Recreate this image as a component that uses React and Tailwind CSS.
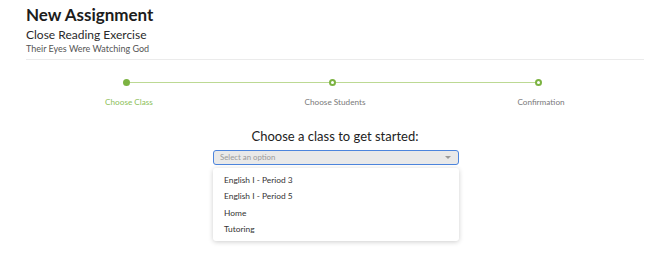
const steps = [
    { label: 'Choose Class', done: true },
    { label: 'Choose Students', done: false },
    { label: 'Confirmation', done: false },
];

const options = ['English I - Period 3', 'English I - Period 5', 'Home', 'Tutoring'];

const Step = ({ step, index, count }) => {
    return (
        <div className="flex flex-col items-center">
            <div className="flex items-center w-full h-[7px] -translate-x-[3px]">
                <div className={`flex-1 h-px ${index === 0 ? '' : 'bg-[#bcd993]'}`} />
                {step.done ? (
                    <div className="w-[7px] h-[7px] rounded-full bg-[#7cb342]" />
                ) : (
                    <div className="w-[7px] h-[7px] rounded-full border-2 border-[#7cb342] bg-white" />
                )}
                <div className={`flex-1 h-px ${index === count - 1 ? '' : 'bg-[#bcd993]'}`} />
            </div>
            <p className={`mt-[10.8px] text-[8.2px] leading-[10px] ${step.done ? 'text-[#8dbf5a]' : 'text-[#7a7a7a]'}`}>
                {step.label}
            </p>
        </div>
    );
};

export default function App() {
    return (
        <div className="w-[670px] h-[272px] bg-white px-[26px] pt-[5px] font-['Lato',sans-serif] text-[#222]">
            <div className="pb-[5.5px] border-b border-[#ebebeb]">
                <h1 className="text-[17px] leading-[20px] font-bold text-[#1c1c1c]">New Assignment</h1>
                <h2 className="mt-[3px] text-[12px] leading-[14px] text-[#2a2a2a]">Close Reading Exercise</h2>
                <p className="mt-[0.5px] text-[9px] leading-[11px] text-[#555]">Their Eyes Were Watching God</p>
            </div>

            <div className="grid grid-cols-3 mt-[19px]">
                {steps.map((s, i) => (
                    <Step key={s.label} step={s} index={i} count={steps.length} />
                ))}
            </div>

            <div className="flex flex-col items-center mt-[21.2px]">
                <p className="text-[13px] leading-[16px] text-[#222]">Choose a class to get started:</p>
                <div className="relative mt-[6px] w-[246px] translate-x-[1px]">
                    <div className="flex items-center justify-between h-[15.5px] pl-[6px] pr-[7px] rounded-[3px] border-[1.5px] border-[#4d85dd] bg-[#e9e9e9]">
                        <span className="text-[7.8px] text-[#9a9a9a]">Select an option</span>
                        <span className="w-0 h-0 border-x-[3px] border-x-transparent border-t-[3px] border-t-[#999]" />
                    </div>
                    <ul className="absolute left-0 top-[18px] w-full pt-[3.7px] pb-[3px] bg-white rounded-[3px] shadow-[0_1px_5px_rgba(0,0,0,0.2)]">
                        {options.map((o) => (
                            <li key={o} className="px-[11px] text-[8.4px] leading-[16.5px] text-[#333]">
                                {o}
                            </li>
                        ))}
                    </ul>
                </div>
            </div>
        </div>
    );
}
